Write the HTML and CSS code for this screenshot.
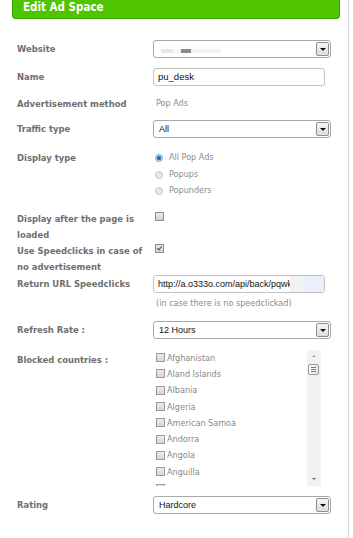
FILE: index.html
```html
<!DOCTYPE html>
<html>
<head>
<meta charset="utf-8">
<link rel="stylesheet" href="styles.css">
</head>
<body>
<div class="page">
  <div class="header">Edit Ad Space</div>
  <div class="form">
    <div class="row r-website">
      <div class="label">Website</div>
      <div class="field">
        <div class="select">
          <span class="blur"><i class="b1"></i><i class="b2"></i><i class="b3"></i><i class="b4"></i></span>
          <span class="arrow"></span>
        </div>
      </div>
    </div>
    <div class="row r-name">
      <div class="label">Name</div>
      <div class="field"><div class="input">pu_desk</div></div>
    </div>
    <div class="row r-method">
      <div class="label">Advertisement method</div>
      <div class="field"><div class="plain">Pop Ads</div></div>
    </div>
    <div class="row r-traffic">
      <div class="label">Traffic type</div>
      <div class="field"><div class="select"><span class="val">All</span><span class="arrow"></span></div></div>
    </div>
    <div class="row r-display">
      <div class="label">Display type</div>
      <div class="field radios">
        <div class="opt"><span class="radio on"></span>All Pop Ads</div>
        <div class="opt"><span class="radio"></span>Popups</div>
        <div class="opt"><span class="radio"></span>Popunders</div>
      </div>
    </div>
    <div class="row r-after">
      <div class="label">Display after the page is loaded</div>
      <div class="field"><span class="check"></span></div>
    </div>
    <div class="row r-speed">
      <div class="label">Use Speedclicks in case of no advertisement</div>
      <div class="field"><span class="check on"></span></div>
    </div>
    <div class="row r-url">
      <div class="label">Return URL Speedclicks</div>
      <div class="field">
        <div class="input url">http://a.o333o.com/api/back/pqwk<i class="fade"></i></div>
        <div class="note">(in case there is no speedclickad)</div>
      </div>
    </div>
    <div class="row r-refresh">
      <div class="label">Refresh Rate :</div>
      <div class="field"><div class="select"><span class="val">12 Hours</span><span class="arrow"></span></div></div>
    </div>
    <div class="row r-blocked">
      <div class="label">Blocked countries :</div>
      <div class="field">
        <div class="listbox">
          <ul class="countries">
            <li><span class="cb"></span>Afghanistan</li>
            <li><span class="cb"></span>Aland Islands</li>
            <li><span class="cb"></span>Albania</li>
            <li><span class="cb"></span>Algeria</li>
            <li><span class="cb"></span>American Samoa</li>
            <li><span class="cb"></span>Andorra</li>
            <li><span class="cb"></span>Angola</li>
            <li><span class="cb"></span>Anguilla</li>
            <li><span class="cb"></span></li>
          </ul>
          <div class="scrollbar">
            <span class="up"></span>
            <span class="thumb"></span>
            <span class="down"></span>
          </div>
        </div>
      </div>
    </div>
    <div class="row r-rating">
      <div class="label">Rating</div>
      <div class="field"><div class="select"><span class="val">Hardcore</span><span class="arrow"></span></div></div>
    </div>
  </div>
</div>
</body>
</html>
```

FILE: styles.css
```css
html, body {
  margin: 0;
  padding: 0;
  background: #fff;
}
.page {
  width: 348px;
  height: 538px;
  border-right: 1px solid #d6d6d6;
  box-sizing: content-box;
  font-family: "DejaVu Sans Condensed", "DejaVu Sans", sans-serif;
  font-stretch: condensed;
}
.header {
  margin: 0 8px 0 12px;
  height: 19px;
  box-sizing: border-box;
  background: #50c400;
  border: 1px solid #3f9e00;
  border-top: none;
  border-radius: 0 0 4px 4px;
  color: #fff;
  font-weight: bold;
  font-size: 11.5px;
  line-height: 15px;
  padding-left: 10px;
}
.form {
  padding-left: 17px;
}
.row {
  display: grid;
  grid-template-columns: 136px 178px;
}
.label {
  font-weight: bold;
  font-size: 9.4px;
  line-height: 16px;
  color: #6f6f6f;
  padding-right: 4px;
}
.r-website { margin-top: 21px; }
.r-name { margin-top: 10px; }
.r-method { margin-top: 10px; }
.r-traffic { margin-top: 8px; }
.r-display { margin-top: 12px; }
.r-after { margin-top: 11px; }
.r-speed { margin-top: 0; }
.r-url { margin-top: 0; }
.r-refresh { margin-top: 10px; }
.r-blocked { margin-top: 13px; }
.r-rating { margin-top: 10px; }

.r-website .label, .r-name .label, .r-traffic .label,
.r-refresh .label, .r-rating .label, .r-url .label { padding-top: 1px; }

.select {
  height: 18px;
  box-sizing: border-box;
  border: 1px solid #a9a9a9;
  border-radius: 3px;
  background: #fff;
  display: flex;
  align-items: center;
  position: relative;
  font-family: "Liberation Sans", Arial, sans-serif;
  font-size: 9px;
  color: #111;
}
.select .val {
  flex: 1;
  padding-left: 5px;
}
.select .arrow {
  width: 13px;
  height: 14px;
  margin-right: 1px;
  box-sizing: border-box;
  border: 1px solid #8e8e8e;
  border-radius: 2px;
  background: linear-gradient(#f6f6f6, #dcdcdc);
  position: relative;
  margin-left: auto;
}
.select .arrow::after {
  content: "";
  position: absolute;
  left: 3px;
  top: 5px;
  border-left: 3px solid transparent;
  border-right: 3px solid transparent;
  border-top: 3px solid #111;
}
.blur {
  display: flex;
  align-items: center;
  height: 100%;
  padding-left: 7px;
}
.blur i { display: block; height: 4px; margin-top: 4px; }
.blur .b1 { width: 12px; background: #e6e6e6; }
.blur .b2 { width: 8px; background: #f7f7f7; }
.blur .b3 { width: 10px; background: #8a8a8a; }
.blur .b4 { width: 30px; background: #f3f3f3; }

.input {
  width: 172px;
  height: 18px;
  box-sizing: border-box;
  border: 1px solid #c3c3c3;
  border-radius: 3px;
  font-family: "Liberation Sans", Arial, sans-serif;
  font-size: 9.5px;
  line-height: 16px;
  padding-left: 4px;
  color: #111;
  position: relative;
  overflow: hidden;
  white-space: nowrap;
}
.input.url { font-size: 9px; }
.input .fade {
  position: absolute;
  right: 0;
  top: 0;
  width: 34px;
  height: 16px;
  background: linear-gradient(90deg, #f2f2f2 0, #f2f2f2 40%, #eaf1fa 40%);
}
.plain, .opt, .note, .countries li {
  font-family: "DejaVu Sans Condensed", "DejaVu Sans", sans-serif;
  font-size: 9px;
  color: #8c8c8c;
}
.plain { line-height: 14px; padding-left: 3px; }
.radios { display: flex; flex-direction: column; }
.opt {
  height: 16.5px;
  line-height: 14px;
  display: flex;
  align-items: flex-start;
  padding-left: 2px;
}
.radio {
  width: 6px;
  height: 6px;
  margin: 4px 6px 0 0;
  border-radius: 50%;
  background: #e8e8e8;
  border: 1px solid #c8c8c8;
  flex: none;
}
.radio.on {
  background: radial-gradient(circle, #1d5f9f 0, #2a78c0 45%, #cfd9e4 60%);
  border-color: #8ea3b8;
}
.check {
  display: block;
  width: 7px;
  height: 7px;
  margin: 1px 0 0 2px;
  border: 1px solid #8f8f8f;
  background: linear-gradient(#e9e9e9, #d2d2d2);
  position: relative;
}
.check.on::after {
  content: "";
  position: absolute;
  left: 2px;
  top: 0;
  width: 2px;
  height: 4px;
  border-right: 1.5px solid #2d4fa8;
  border-bottom: 1.5px solid #2d4fa8;
  transform: rotate(40deg);
}
.note {
  line-height: 16px;
  padding: 2px 0 0 3px;
}
.listbox {
  width: 168px;
  height: 139px;
  margin-top: -5px;
  overflow: hidden;
  display: flex;
  position: relative;
}
.countries {
  list-style: none;
  margin: 0;
  padding: 3px 0 0 3px;
  flex: 1;
}
.countries li {
  height: 16.3px;
  line-height: 16px;
  display: flex;
  align-items: center;
  color: #888;
  white-space: nowrap;
}
.cb {
  display: block;
  width: 7px;
  height: 7px;
  border: 1px solid #9a9a9a;
  background: linear-gradient(#ececec, #d6d6d6);
  margin-right: 2px;
  flex: none;
}
.scrollbar {
  width: 14px;
  height: 136px;
  margin-top: 3px;
  background: #f2f2f2;
  position: relative;
  flex: none;
}
.scrollbar .up, .scrollbar .down {
  position: absolute;
  left: 5px;
  width: 0;
  height: 0;
  border-left: 2px solid transparent;
  border-right: 2px solid transparent;
}
.scrollbar .up { top: 5px; border-bottom: 2px solid #999; }
.scrollbar .down { bottom: 6px; border-top: 2px solid #666; }
.scrollbar .thumb {
  position: absolute;
  left: 1px;
  top: 14px;
  width: 11px;
  height: 11px;
  box-sizing: border-box;
  border: 1px solid #9a9a9a;
  border-radius: 2px;
  background: linear-gradient(90deg, #fdfdfd, #e6e6e6);
}
.scrollbar .thumb::after {
  content: "";
  position: absolute;
  left: 2px;
  top: 2px;
  width: 5px;
  height: 5px;
  border-top: 1px solid #777;
  border-bottom: 1px solid #777;
  box-sizing: border-box;
  background: linear-gradient(#fff 0, #fff 1px, #777 1px, #777 2px, #fff 2px);
}
```
